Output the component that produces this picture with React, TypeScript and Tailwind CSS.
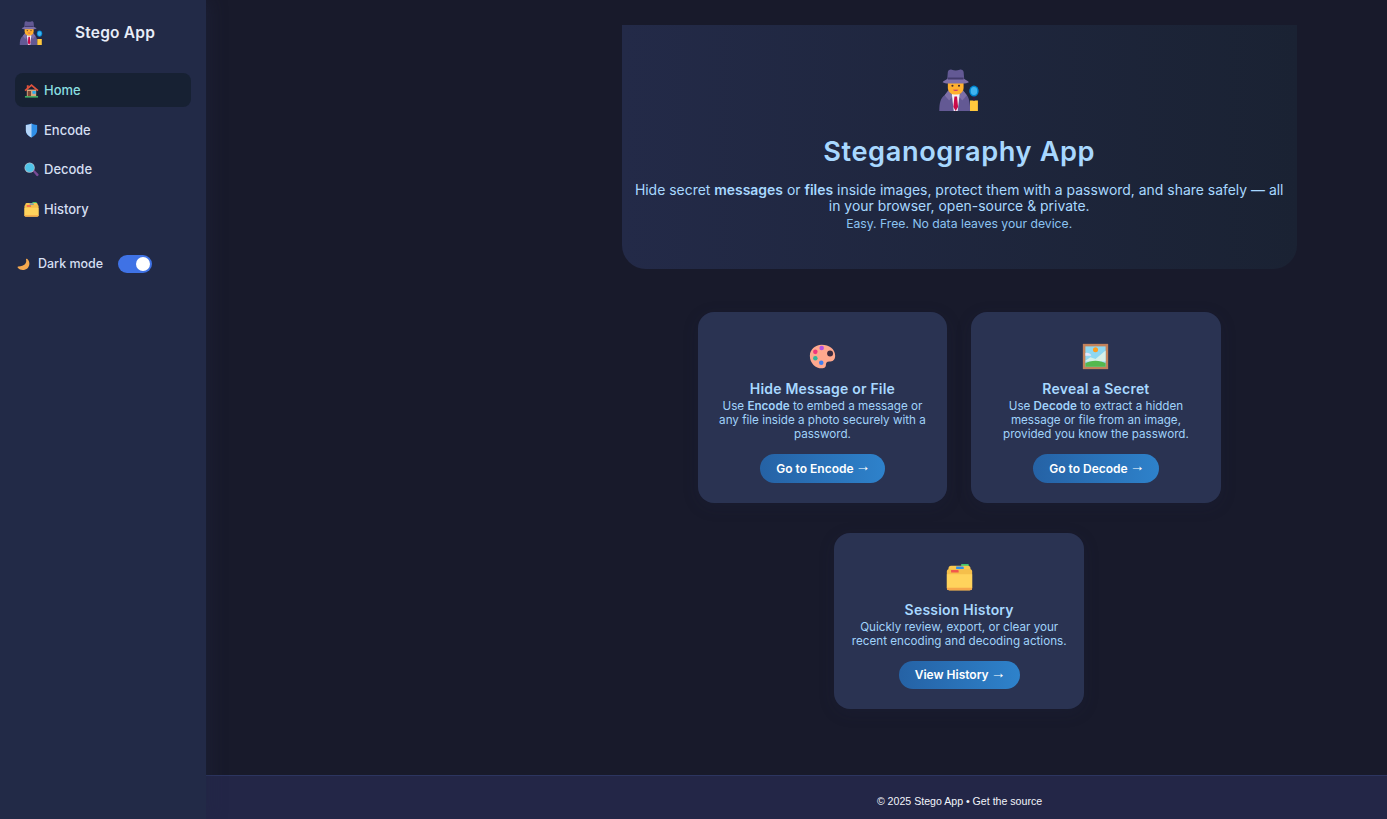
function Detective({ className }: { className: string }) {
  return (
    <svg viewBox="0 0 32 32" className={className}>
      <path d="M1 32c0-6 1-10 4-12l3-3h11l3 3c1.500 2 2.500 5 2.500 12z" fill="#635994" />
      <path d="M5 20l3-4 3 5-2.500 3zM22 20l-3-4-3 5 2.500 3z" fill="#7d6fa8" />
      <path d="M10.500 19h6l-1.500 13h-3z" fill="#f4f1f8" />
      <path d="M12.500 21h2l.8 8-1.800 3-1.800-3z" fill="#ca0b4a" />
      <path d="M7.500 9h12v5c0 3.500-2.500 5.500-6 5.500s-6-2-6-5.500z" fill="#ffb02e" />
      <path d="M11.500 15.800h4c-.4 1-3.600 1-4 0z" fill="#bb1d80" />
      <circle cx="11" cy="12.800" r=".8" fill="#402a32" />
      <circle cx="16" cy="12.800" r=".8" fill="#402a32" />
      <path d="M7.500 2c.5-1.500 2-2 3-1.500 2 .8 4 .8 6 0 1-.5 2.500 0 3 1.500l.5 6h-13z" fill="#635994" />
      <path d="M3.500 10c1.500-1.500 4-2.500 4-2.500h12s2.500 1 4 2.500c-1 .6-3 1-4 1h-12c-1 0-3-.4-4-1z" fill="#7d6fa8" />
      <path d="M7.500 6.500h12v1.500h-12z" fill="#433b6b" />
      <path d="M24.400 24h6v8h-6z" fill="#ffc83d" />
      <path d="M26.600 20h1.600v4h-1.600z" fill="#321b41" />
      <ellipse cx="27.400" cy="16.800" rx="3.600" ry="4.200" fill="#0084ce" />
      <ellipse cx="27.400" cy="16.800" rx="2.500" ry="3.100" fill="#3fb4f0" />
    </svg>
  );
}

function House({ className }: { className: string }) {
  return (
    <svg viewBox="0 0 32 32" className={className}>
      <path d="M2 28h28v3H2z" fill="#44c46b" />
      <path d="M6 14h20v14H6z" fill="#d3a57e" />
      <path d="M16 2L1 15l2.500 2.500L16 7l12.500 10.500L31 15z" fill="#e0533d" />
      <path d="M6 5h4v4l-4 4z" fill="#e0533d" />
      <path d="M8 17h7v11H8z" fill="#7d4533" />
      <path d="M18 17h7v6h-7z" fill="#26a9f0" />
    </svg>
  );
}

function Shield({ className }: { className: string }) {
  return (
    <svg viewBox="0 0 32 32" className={className}>
      <path d="M16 1c3 2 7 3 12 3v12c0 7-6 12-12 15C10 28 4 23 4 16V4c5 0 9-1 12-3z" fill="#2f8fe8" />
      <path d="M16 1v30C10 28 4 23 4 16V4c5 0 9-1 12-3z" fill="#b4d4f8" />
    </svg>
  );
}

function Magnifier({ className }: { className: string }) {
  return (
    <svg viewBox="0 0 32 32" className={className}>
      <path d="M19 20l3-3 9 9c1 2-2 5-4 4z" fill="#7a4a96" />
      <circle cx="12" cy="12" r="11" fill="#b4c0cc" />
      <circle cx="12" cy="12" r="9.500" fill="#4fc3e8" />
    </svg>
  );
}

function Folder({ className }: { className: string }) {
  return (
    <svg viewBox="0 0 32 32" className={className}>
      <path d="M18 0h8a1 1 0 011 1v3h-9z" fill="#44c46b" />
      <path d="M3 5a3 3 0 013-3h20a3 3 0 013 3v4H3z" fill="#f9c74f" />
      <path d="M12 3h8a1 1 0 011 1v2h-9z" fill="#2f8fe8" />
      <path d="M1 9a3 3 0 013-3h24a3 3 0 013 3v19a3 3 0 01-3 3H4a3 3 0 01-3-3z" fill="#f5bf4b" />
      <path d="M6 7h8a1 1 0 011 1v2H6z" fill="#f2574c" />
      <path d="M1 12h30v16a3 3 0 01-3 3H4a3 3 0 01-3-3z" fill="#ffd35c" />
      <path d="M1 28h30a3 3 0 01-3 3H4a3 3 0 01-3-3z" fill="#f5a54a" />
    </svg>
  );
}

function Moon({ className }: { className: string }) {
  return (
    <svg viewBox="0 0 32 32" className={className}>
      <path d="M22 3c3 9-3 17-19 18-2 0-2 2-1 3 6 7 17 7 24 1 6-6 6-16 0-22-2-2-4-1-4 0z" fill="#f5a94f" />
    </svg>
  );
}

function Palette({ className }: { className: string }) {
  return (
    <svg viewBox="0 0 32 32" className={className}>
      <path d="M15 2C7 2 1 8 1 15c0 9 7 15 14 15 4 0 5-2 5-4s1-4 4-4c4 0 7-2 7-7C31 7 24 2 15 2z" fill="#ffa98e" />
      <circle cx="25" cy="12.500" r="3.500" fill="#3b2b3f" />
      <circle cx="15" cy="6" r="2.700" fill="#b552e0" />
      <circle cx="7.500" cy="10.500" r="2.700" fill="#f0377e" />
      <circle cx="7.500" cy="18" r="2.700" fill="#2fb59b" />
      <circle cx="14.500" cy="23.500" r="2.700" fill="#3f7ff0" />
    </svg>
  );
}

function Picture({ className }: { className: string }) {
  return (
    <svg viewBox="0 0 32 32" className={className}>
      <path d="M1 1h30v30H1z" fill="#c4825a" />
      <path d="M4 4h24v24H4z" fill="#8ed8f2" />
      <circle cx="16" cy="8" r="3" fill="#ff9d1e" />
      <path d="M4 12c2-1 6 0 7 3H4z" fill="#e8e4f8" />
      <path d="M4 21l6-4 6 2 12-10v13H4z" fill="#d8f0e8" />
      <path d="M4 28v-4c6-4 18-4 24 0v4z" fill="#55b84e" />
    </svg>
  );
}

const navItems = [
  { label: "Home", Icon: House, active: true },
  { label: "Encode", Icon: Shield, active: false },
  { label: "Decode", Icon: Magnifier, active: false },
  { label: "History", Icon: Folder, active: false },
];

function Sidebar() {
  return (
    <aside className="z-10 flex w-[206px] shrink-0 flex-col bg-[#222a47] shadow-[4px_0_16px_rgba(35,41,70,0.35)]">
      <div className="flex h-[65px] items-center pl-[19px]">
        <Detective className="h-6 w-6" />
        <span className="mt-px ml-8 text-[15.5px] font-semibold tracking-[0.2px] text-[#e8edf8]">Stego App</span>
      </div>
      <nav className="mt-[8.3px] flex flex-col gap-[5.5px] px-[15px]">
        {navItems.map(({ label, Icon, active }) => (
          <a
            key={label}
            className={
              active
                ? "flex h-[34px] items-center gap-[5px] rounded-lg bg-[#172133] pt-px pl-[9px] text-[13px] font-medium text-[#8adfe0]"
                : "flex h-[34px] items-center gap-[5px] rounded-lg pt-px pl-[9px] text-[13px] font-medium text-[#d5dff2]"
            }
          >
            <Icon className="h-[15px] w-[15px]" />
            {label}
          </a>
        ))}
      </nav>
      <div className="mt-[29px] flex items-center pl-[17px]">
        <Moon className="h-[13px] w-[13px]" />
        <span className="ml-2 text-[12.5px] font-medium text-[#d5dff2]">Dark mode</span>
        <span className="ml-[15px] flex h-[18px] w-[34px] items-center justify-end rounded-full bg-[#3f72e5] pr-[2px]">
          <span className="h-[14px] w-[14px] rounded-full bg-white" />
        </span>
      </div>
    </aside>
  );
}

function Card({
  Icon,
  title,
  children,
  action,
}: {
  Icon: ({ className }: { className: string }) => React.JSX.Element;
  title: string;
  children: React.ReactNode;
  action: string;
}) {
  return (
    <div className="flex w-[249.5px] flex-col items-center rounded-[16px] bg-[#2a3352] px-4 pt-[31px] pb-5 text-center shadow-[0_4px_16px_rgba(35,41,70,0.18)]">
      <Icon className="h-[27px] w-[27px]" />
      <h2 className="mt-[9px] text-[14px] leading-[20px] font-semibold tracking-[0.2px] text-[#a8d8ff]">{title}</h2>
      <p className="text-[11.65px] leading-[14px] text-[#a0d2fa]">{children}</p>
      <a className="mt-[13px] flex h-[28.6px] items-center rounded-full bg-gradient-to-r from-[#2562a5] to-[#2e82cb] px-4 pt-px text-[12px] font-semibold whitespace-pre text-white">
        {action}{" "}
        <span
          className="-mr-[2px] -ml-[1px] -translate-y-[3px] text-[15px] leading-none font-normal"
          style={{ fontFamily: "'Liberation Sans', sans-serif" }}
        >
          →
        </span>
      </a>
    </div>
  );
}

export default function App() {
  return (
    <div
      className="flex h-screen w-full overflow-hidden bg-[#181a2b]"
      style={{ fontFamily: "Inter, 'Liberation Sans', sans-serif" }}
    >
      <Sidebar />
      <div className="flex min-w-0 flex-1 flex-col">
        <main className="flex flex-1 flex-col items-center pt-[25px] pl-[325.4px]">
          <section className="flex h-[244px] w-[675px] flex-col items-center rounded-b-[24px] bg-gradient-to-r from-[#232a48] to-[#1a2233] px-[10px] pt-[44px] text-center">
            <Detective className="h-[42px] w-[42px]" />
            <h1 className="mt-[21px] text-[27.2px] leading-[40px] font-semibold tracking-[0.6px] text-[#a8d8ff]">
              Steganography App
            </h1>
            <p className="mt-[10px] text-[13.94px] leading-[16px] text-[#a8d8ff]">
              Hide secret <strong className="font-semibold">messages</strong> or{" "}
              <strong className="font-semibold">files</strong> inside images, protect them with a password, and share
              safely — all in your browser, open-source &amp; private.
            </p>
            <p className="mt-[1px] text-[12.2px] leading-[18px] text-[#8cc4f2]">Easy. Free. No data leaves your device.</p>
          </section>
          <div className="mt-[43px] flex w-[675px] flex-wrap justify-center gap-x-6 gap-y-[30px]">
            <Card Icon={Palette} title="Hide Message or File" action="Go to Encode">
              Use <strong className="font-semibold">Encode</strong> to embed a message or any file inside a photo securely
              with a password.
            </Card>
            <Card Icon={Picture} title="Reveal a Secret" action="Go to Decode">
              Use <strong className="font-semibold">Decode</strong> to extract a hidden message or file from an image,
              provided you know the password.
            </Card>
            <Card Icon={Folder} title="Session History" action="View History">
              Quickly review, export, or clear your recent encoding and decoding actions.
            </Card>
          </div>
        </main>
        <footer
          className="flex h-[44px] shrink-0 items-center justify-center border-t border-[#2c3560] bg-[#232647] pt-[9px] pl-[326px] text-[10.6px] text-[#f2f4fa]"
          style={{ fontFamily: "'Liberation Sans', Arial, sans-serif" }}
        >
          © 2025 Stego App • Get the source
        </footer>
      </div>
    </div>
  );
}
